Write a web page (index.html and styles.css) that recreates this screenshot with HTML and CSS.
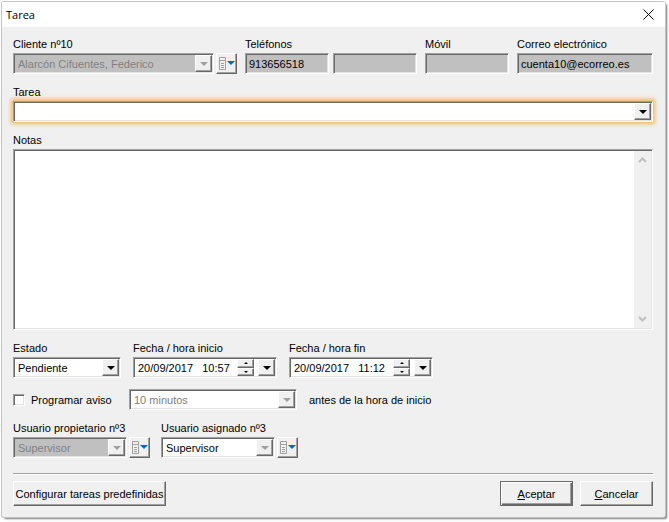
FILE: index.html
```html
<!DOCTYPE html>
<html lang="es">
<head>
    <meta charset="UTF-8">
    <meta name="viewport" content="width=device-width, initial-scale=1.0">
    <title>Tarea</title>
    <link rel="stylesheet" href="styles.css">
</head>
<body>
    <form class="dialog" action="#">
        <div class="titlebar">
            <h1>Tarea</h1>
            <button type="button" class="close" aria-label="Cerrar">
                <svg width="11" height="11" viewBox="0 0 11 11"><path d="M.5 .5l10 10M10.5 .5l-10 10" stroke="#000" fill="none"/></svg>
            </button>
        </div>

        <div class="content">
            <div class="contact">
                <div class="field">
                    <label for="cliente">Cliente nº10</label>
                    <div class="with-menu">
                        <div class="combo gray disabled">
                            <select id="cliente" disabled><option>Alarcón Cifuentes, Federico</option></select>
                            <span class="drop"></span>
                        </div>
                        <button type="button" class="menu" aria-label="Opciones de cliente">
                            <svg width="16" height="13" viewBox="0 0 16 13"><path d="M.5 .5h6v12h-6zM.5 3.5h6M2 6.5h3M2 8.5h3M2 10.5h3" fill="none" stroke="#a0a0a0"/><path d="M8 4h8l-4 4z" fill="#0066cc"/></svg>
                        </button>
                    </div>
                </div>
                <div class="field">
                    <label for="telefono1">Teléfonos</label>
                    <div class="phones">
                        <input class="text gray" id="telefono1" type="tel" value="913656518" readonly>
                        <input class="text gray" id="telefono2" type="tel" aria-label="Teléfono 2" readonly>
                    </div>
                </div>
                <div class="field">
                    <label for="movil">Móvil</label>
                    <input class="text gray" id="movil" type="tel" readonly>
                </div>
                <div class="field">
                    <label for="correo">Correo electrónico</label>
                    <input class="text gray" id="correo" type="email" value="cuenta10@ecorreo.es" readonly>
                </div>
            </div>

            <div class="field">
                <label for="tarea">Tarea</label>
                <div class="combo focused">
                    <select id="tarea"><option></option></select>
                    <span class="drop"></span>
                </div>
            </div>

            <div class="field notes">
                <label for="notas">Notas</label>
                <div class="memo">
                    <textarea id="notas"></textarea>
                    <div class="scroll">
                        <svg width="9" height="6" viewBox="0 0 9 6"><path d="M1 5l3.500-3.500L8 5" fill="none" stroke="#bfbfbf" stroke-width="2"/></svg>
                        <svg width="9" height="6" viewBox="0 0 9 6"><path d="M1 1l3.500 3.500L8 1" fill="none" stroke="#bfbfbf" stroke-width="2"/></svg>
                    </div>
                </div>
            </div>

            <div class="dates">
                <div class="field state">
                    <label for="estado">Estado</label>
                    <div class="combo">
                        <select id="estado"><option>Pendiente</option></select>
                        <span class="drop"></span>
                    </div>
                </div>
                <div class="field date">
                    <label for="inicio">Fecha / hora inicio</label>
                    <div class="combo">
                        <input id="inicio" type="text" value="20/09/2017   10:57">
                        <span class="spin"><button type="button" class="up" aria-label="Subir"></button><button type="button" class="down" aria-label="Bajar"></button></span>
                        <button type="button" class="drop" aria-label="Abrir calendario"></button>
                    </div>
                </div>
                <div class="field date">
                    <label for="fin">Fecha / hora fin</label>
                    <div class="combo">
                        <input id="fin" type="text" value="20/09/2017   11:12">
                        <span class="spin"><button type="button" class="up" aria-label="Subir"></button><button type="button" class="down" aria-label="Bajar"></button></span>
                        <button type="button" class="drop" aria-label="Abrir calendario"></button>
                    </div>
                </div>
            </div>

            <div class="reminder">
                <label class="check"><input type="checkbox"> Programar aviso</label>
                <div class="combo disabled">
                    <select id="aviso" disabled><option>10 minutos</option></select>
                    <span class="drop"></span>
                </div>
                <label for="aviso">antes de la hora de inicio</label>
            </div>

            <div class="users">
                <div class="field">
                    <label for="propietario">Usuario propietario nº3</label>
                    <div class="with-menu">
                        <div class="combo gray disabled">
                            <select id="propietario" disabled><option>Supervisor</option></select>
                            <span class="drop"></span>
                        </div>
                        <button type="button" class="menu" aria-label="Opciones de propietario">
                            <svg width="16" height="13" viewBox="0 0 16 13"><path d="M.5 .5h6v12h-6zM.5 3.5h6M2 6.5h3M2 8.5h3M2 10.5h3" fill="none" stroke="#a0a0a0"/><path d="M8 4h8l-4 4z" fill="#0066cc"/></svg>
                        </button>
                    </div>
                </div>
                <div class="field">
                    <label for="asignado">Usuario asignado nº3</label>
                    <div class="with-menu">
                        <div class="combo locked">
                            <select id="asignado"><option>Supervisor</option></select>
                            <span class="drop"></span>
                        </div>
                        <button type="button" class="menu" aria-label="Opciones de asignado">
                            <svg width="16" height="13" viewBox="0 0 16 13"><path d="M.5 .5h6v12h-6zM.5 3.5h6M2 6.5h3M2 8.5h3M2 10.5h3" fill="none" stroke="#a0a0a0"/><path d="M8 4h8l-4 4z" fill="#0066cc"/></svg>
                        </button>
                    </div>
                </div>
            </div>

            <div class="footer">
                <button type="button" class="btn wide">Configurar tareas predefinidas</button>
                <button type="submit" class="btn default"><u>A</u>ceptar</button>
                <button type="button" class="btn"><u>C</u>ancelar</button>
            </div>
        </div>
    </form>
</body>
</html>
```

FILE: styles.css
```css
* {
    box-sizing: border-box;
}

body {
    margin: 0;
    padding: 2px 4px 5px 2px;
    height: 100vh;
    background: #fff;
    color: #000;
    font: 11px/14px "Liberation Sans", Arial, sans-serif;
}

input, select, textarea, button {
    margin: 0;
    padding: 0;
    border: 0;
    border-radius: 0;
    outline: none;
    background: none;
    color: inherit;
    font: inherit;
    appearance: none;
}

.dialog {
    display: flex;
    flex-direction: column;
    height: 100%;
    border-radius: 2px;
    background: #f0f0f0;
    box-shadow: 0 0 0 1px #c4c4c4, 2px 2px 2px #777;
}

.titlebar {
    display: flex;
    align-items: center;
    justify-content: space-between;
    height: 25px;
    padding: 0 11px 0 4px;
    background: #fff;
}

.titlebar h1 {
    margin: 0;
    font: 11px/14px "Open Sans", sans-serif;
}

.close {
    display: flex;
}

.content {
    flex: 1;
    display: flex;
    flex-direction: column;
    gap: 11px;
    padding: 10px 12px 11px 11px;
}

.field {
    display: flex;
    flex-direction: column;
    gap: 2px;
}

.contact {
    display: grid;
    grid-template-columns: 1fr 172px 84px 136px;
    gap: 8px;
}

.phones {
    display: grid;
    grid-template-columns: 1fr 1fr;
    gap: 4px;
}

.with-menu {
    display: flex;
    gap: 2px;
}

.with-menu .combo {
    flex: 1;
}

/* sunken boxes */
.text, .combo, .memo {
    min-width: 0;
    height: 21px;
    border: 1px solid;
    border-color: #a0a0a0 #fff #fff #a0a0a0;
    background: #fff;
    box-shadow: inset 1px 1px #696969, inset -1px -1px #e3e3e3;
}

.text {
    width: 100%;
    padding: 0 3px;
}

.combo {
    display: flex;
    padding: 1px;
}

.combo select, .combo input {
    flex: 1;
    min-width: 0;
    padding: 0 3px;
    opacity: 1;
    white-space: pre;
}

.combo.gray, .text.gray {
    background: #c0c0c0;
}

.disabled select {
    color: #808080;
}

.focused {
    box-shadow: inset 1px 1px #696969, inset -1px -1px #e3e3e3, 0 0 4px 2px #f0b76c;
}

/* raised parts */
.drop, .menu, .btn, .spin button {
    border: 1px solid;
    border-color: #fff #696969 #696969 #fff;
    background: #f0f0f0;
    box-shadow: inset -1px -1px #a0a0a0;
}

.drop {
    display: flex;
    align-items: center;
    justify-content: center;
    width: 17px;
}

.drop::after {
    content: "";
    border: 4px solid transparent;
    border-top-color: #000;
    border-bottom: 0;
}

.disabled .drop::after, .locked .drop::after {
    border-top-color: #a0a0a0;
}

.menu {
    display: flex;
    align-items: center;
    justify-content: center;
    width: 21px;
    height: 21px;
}

.spin {
    display: flex;
    flex-direction: column;
    width: 17px;
    margin-right: 4px;
}

.spin button {
    flex: 1;
    display: flex;
    align-items: center;
    justify-content: center;
}

.spin button::after {
    content: "";
    border: 2px solid transparent;
}

.spin .up::after {
    border-bottom-color: #000;
    border-top: 0;
}

.spin .down::after {
    border-top-color: #000;
    border-bottom: 0;
}

.notes, .memo {
    flex: 1;
}

.memo {
    display: flex;
    padding: 1px;
}

.memo textarea {
    flex: 1;
    padding: 2px 3px;
    resize: none;
}

.scroll {
    display: flex;
    flex-direction: column;
    align-items: center;
    justify-content: space-between;
    width: 17px;
    padding: 6px 0;
    background: #f0f0f0;
}

.dates {
    display: flex;
    gap: 12px;
}

.state {
    width: 108px;
}

.date {
    width: 144px;
}

.reminder {
    display: flex;
    align-items: center;
}

.reminder .combo {
    width: 168px;
    margin-right: 12px;
}

.check {
    display: flex;
    align-items: center;
    gap: 6px;
    width: 116px;
}

.check input {
    width: 12px;
    height: 12px;
    border: 1px solid;
    border-color: #a0a0a0 #fff #fff #a0a0a0;
    background: #fff;
    box-shadow: inset 1px 1px #696969, inset -1px -1px #e3e3e3;
}

.check input:checked {
    background: #696969;
}

.users {
    display: grid;
    grid-template-columns: 137px 137px;
    gap: 11px;
}

.footer {
    display: flex;
    gap: 7px;
    margin-top: 4px;
    padding-top: 7px;
    border-top: 1px solid #a0a0a0;
    box-shadow: inset 0 1px #fff;
}

.btn {
    width: 73px;
    height: 25px;
}

.wide {
    width: 153px;
    margin-right: auto;
}

.default {
    border-color: #696969;
    box-shadow: inset 1px 1px #fff, inset -1px -1px #696969, inset -2px -2px #a0a0a0;
}
```
